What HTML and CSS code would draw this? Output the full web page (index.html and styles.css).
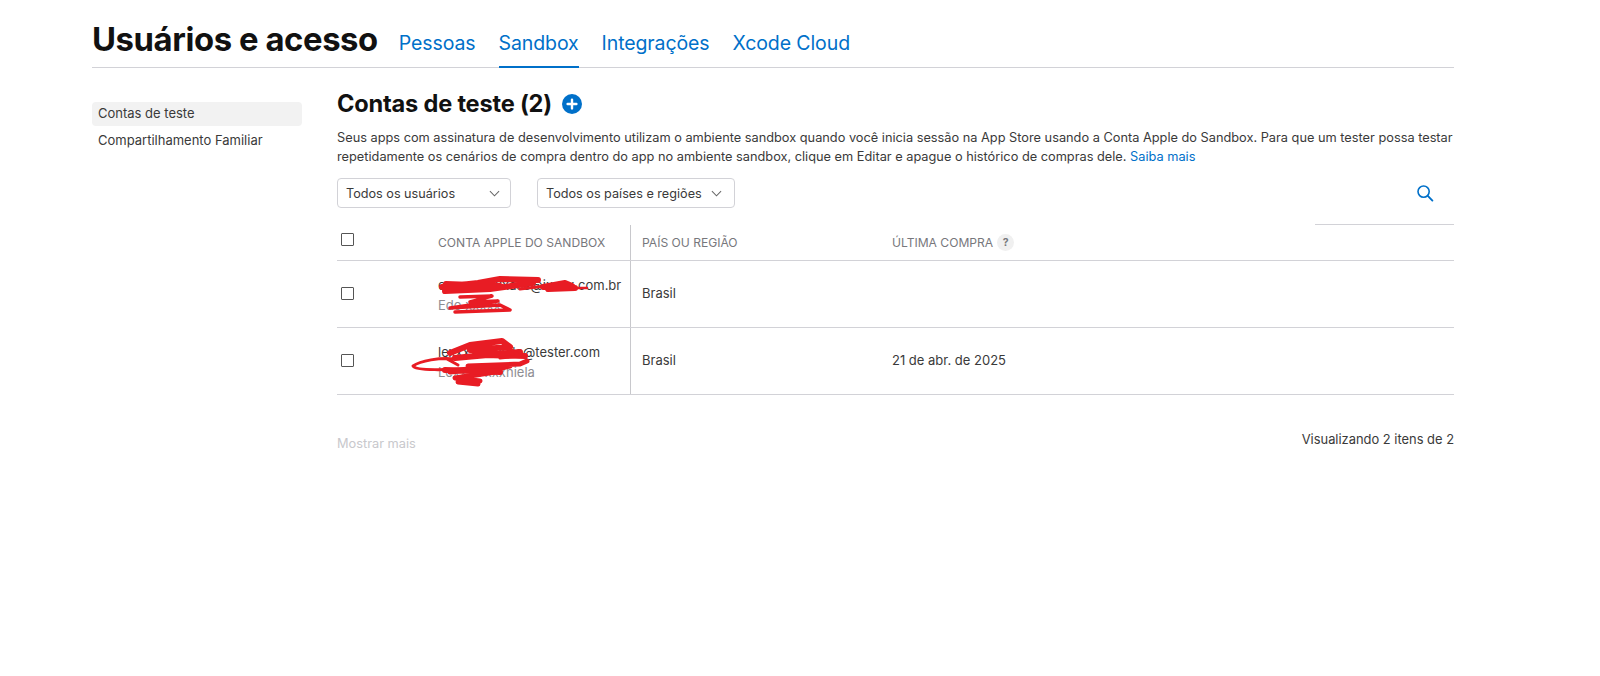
FILE: index.html
```html
<!DOCTYPE html>
<html lang="pt-BR">
<head>
<meta charset="utf-8">
<title>Usuários e acesso</title>
<link rel="stylesheet" href="styles.css">
</head>
<body>
<div class="page">
  <header class="topbar">
    <h1 class="title">Usuários e acesso</h1>
    <nav class="tabs">
      <a class="tab">Pessoas</a>
      <a class="tab tab-active">Sandbox</a>
      <a class="tab">Integrações</a>
      <a class="tab">Xcode Cloud</a>
    </nav>
  </header>
  <div class="layout">
    <aside class="sidebar">
      <a class="side-item side-active">Contas de teste</a>
      <a class="side-item">Compartilhamento Familiar</a>
    </aside>
    <main class="main">
      <div class="heading-row">
        <h2 class="heading">Contas de teste (2)</h2>
        <svg class="add-icon" viewBox="0 0 20 20" width="20" height="20"><circle cx="10" cy="10" r="10" fill="#0070c9"/><path d="M10 5.6v8.8M5.6 10h8.8" stroke="#fff" stroke-width="2.4" stroke-linecap="round"/></svg>
      </div>
      <p class="intro">Seus apps com assinatura de desenvolvimento utilizam o ambiente sandbox quando você inicia sessão na App Store usando a Conta Apple do Sandbox. Para que um tester possa testar repetidamente os cenários de compra dentro do app no ambiente sandbox, clique em Editar e apague o histórico de compras dele. <a class="link">Saiba mais</a></p>
      <div class="filters">
        <div class="select select-users"><span>Todos os usuários</span><svg class="chev" viewBox="0 0 12 7" width="11" height="7"><path d="M1 1l5 5 5-5" fill="none" stroke="#666" stroke-width="1.1"/></svg></div>
        <div class="select select-regions"><span>Todos os países e regiões</span><svg class="chev" viewBox="0 0 12 7" width="11" height="7"><path d="M1 1l5 5 5-5" fill="none" stroke="#666" stroke-width="1.1"/></svg></div>
        <div class="search"><svg viewBox="0 0 18 18" width="18" height="18"><circle cx="7.6" cy="7.6" r="5.6" fill="none" stroke="#0070c9" stroke-width="1.6"/><path d="M11.8 11.8l4.6 4.8" stroke="#0070c9" stroke-width="1.9" stroke-linecap="round"/></svg></div>
      </div>
      <div class="table">
        <div class="row row-head">
          <div class="cell cell-check"><span class="checkbox check-head"></span></div>
          <div class="cell cell-account">CONTA APPLE DO SANDBOX</div>
          <div class="cell cell-country">PAÍS OU REGIÃO</div>
          <div class="cell cell-last">ÚLTIMA COMPRA <span class="help">?</span></div>
        </div>
        <div class="row">
          <div class="cell cell-check"><span class="checkbox"></span></div>
          <div class="cell cell-account"><div class="email">exxxxxxxxxass@ixxxx.com.br</div><div class="name">Edo xxxxx</div></div>
          <div class="cell cell-country">Brasil</div>
          <div class="cell cell-last"></div>
        </div>
        <div class="row">
          <div class="cell cell-check"><span class="checkbox"></span></div>
          <div class="cell cell-account"><div class="email">lexxxxxxxxxla@tester.com</div><div class="name">Lexxxx xxxniela</div></div>
          <div class="cell cell-country">Brasil</div>
          <div class="cell cell-last">21 de abr. de 2025</div>
        </div>
      </div>
      <div class="footer">
        <span class="more">Mostrar mais</span>
        <span class="count">Visualizando 2 itens de 2</span>
      </div>
    </main>
  </div>
</div>
<svg class="scribble" viewBox="0 0 1600 676" width="1600" height="676">
  <g fill="none" stroke="#e81c24" stroke-linecap="round" stroke-linejoin="round">
    <path stroke-width="6" d="M442 287L478 283L500 279L538 280M445 291L490 289L533 283M446 284L500 286"/>
    <path stroke-width="3" d="M520 289L545 286"/>
    <path stroke-width="6" d="M543 287L565 283L572 286L560 284L548 289L575 288"/>
    <path stroke-width="2.5" d="M570 288L587 288"/>
    <path stroke-width="3.5" d="M460 297L492 296L470 302L498 301L450 308L500 305L510 310L455 312"/>
    <path stroke-width="6" d="M450 353L470 345L502 341L510 347L470 350L525 356L485 355L455 358L520 352"/>
    <path stroke-width="3" d="M512 350L520 356L500 358"/>
    <path stroke-width="3" d="M455 359C440 357 420 361 413 366C415 371 450 370 470 368M447 359L458 365"/>
    <path stroke-width="5" d="M468 366L520 364L527 361M450 372L510 366L470 376L495 372L455 378L480 381L458 382L478 384"/>
    <path stroke-width="6" d="M445 370L500 372"/>
  </g>
</svg>
</body>
</html>
```
FILE: styles.css
```css
* { box-sizing: border-box; }
html, body { margin: 0; padding: 0; background: #fff; }
body { font-family: Inter, "Liberation Sans", sans-serif; color: #3a3a3a; width: 1600px; height: 676px; overflow: hidden; position: relative; }
.page { width: 1362px; margin-left: 92px; padding-top: 16px; }
.topbar { display: flex; align-items: flex-end; height: 52px; border-bottom: 1px solid #d2d2d7; }
.title { margin: 1px 21px 0 0; font-size: 32.8px; line-height: 44px; font-weight: 700; color: #111; letter-spacing: -0.4px; align-self: flex-start; white-space: nowrap; }
.tabs { display: flex; gap: 23px; height: 52px; align-items: flex-end; }
.tab { font-size: 19.5px; line-height: 24px; color: #0070c9; padding-bottom: 11px; margin-bottom: -1px; border-bottom: 2px solid transparent; letter-spacing: -0.1px; }
.tab-active { border-bottom-color: #0070c9; }
.layout { display: flex; padding-top: 34px; }
.sidebar { width: 210px; margin-right: 35px; flex: none; display: flex; flex-direction: column; gap: 3px; }
.side-item { font-size: 13px; line-height: 22px; height: 24px; padding-left: 6px; color: #3a3a3a; border-radius: 4px; }
.side-active { background: #f2f2f2; }
.main { flex: 1; min-width: 0; }
.heading-row { display: flex; align-items: center; height: 24px; margin-top: -10px; gap: 10px; }
.heading { margin: 0; font-size: 23.6px; line-height: 28px; font-weight: 700; color: #111; letter-spacing: -0.2px; white-space: nowrap; }
.add-icon { flex: none; }
.intro { margin: 13px 0 0; font-size: 12.78px; line-height: 18.5px; color: #3a3a3a; width: 1125px; }
.link { color: #0070c9; }
.filters { display: flex; align-items: flex-start; margin-top: 12px; height: 47px; }
.select { height: 30px; border: 1px solid #d2d2d7; border-radius: 4px; display: flex; align-items: center; justify-content: space-between; padding: 0 12px 0 8px; font-size: 12.65px; color: #3a3a3a; white-space: nowrap; }
.select-users { width: 174px; margin-right: 26px; padding-right: 10px; }
.select-regions { width: 198px; }
.search { margin-left: auto; width: 139px; height: 47px; border-bottom: 1px solid #d2d2d7; display: flex; justify-content: flex-end; padding: 6px 20px 0 0; }
.row { display: grid; grid-template-columns: 101px 193px 250px 1fr; height: 67px; border-bottom: 1px solid #d2d2d7; }
.row-head { height: 36px; }
.cell { display: flex; flex-direction: column; justify-content: center; font-size: 13px; color: #3a3a3a; padding-bottom: 2px; }
.row-head .cell { font-size: 12.08px; color: #77777c; padding-top: 1px; padding-bottom: 1px; white-space: nowrap; }
.cell-check { padding-left: 4px; }
.cell-account { border-right: 1px solid #c8c8cc; padding-top: 5px; }
.cell-country { padding-left: 11px; }
.cell-last { padding-left: 11px; }
.row-head .cell-last { flex-direction: row; align-items: center; justify-content: flex-start; gap: 4px; }
.checkbox { display: block; width: 13px; height: 13px; border: 1px solid #555; border-radius: 1px; background: #fff; }
.check-head { margin-top: -7px; }
.email { font-size: 13px; line-height: 19px; color: #3a3a3a; white-space: nowrap; }
.name { font-size: 13px; line-height: 21px; color: #8e8e93; white-space: nowrap; }
.help { display: inline-flex; align-items: center; justify-content: center; width: 17px; height: 17px; border-radius: 50%; background: #f0f0f0; font-size: 10.5px; font-weight: 700; color: #77777c; }
.footer { display: flex; justify-content: space-between; align-items: flex-start; margin-top: 37px; }
.more { font-size: 12.8px; line-height: 16px; color: #c8c8cc; margin-top: 4px; }
.count { font-size: 12.9px; line-height: 16px; color: #3a3a3a; }
.scribble { position: absolute; left: 0; top: 0; pointer-events: none; }
```
